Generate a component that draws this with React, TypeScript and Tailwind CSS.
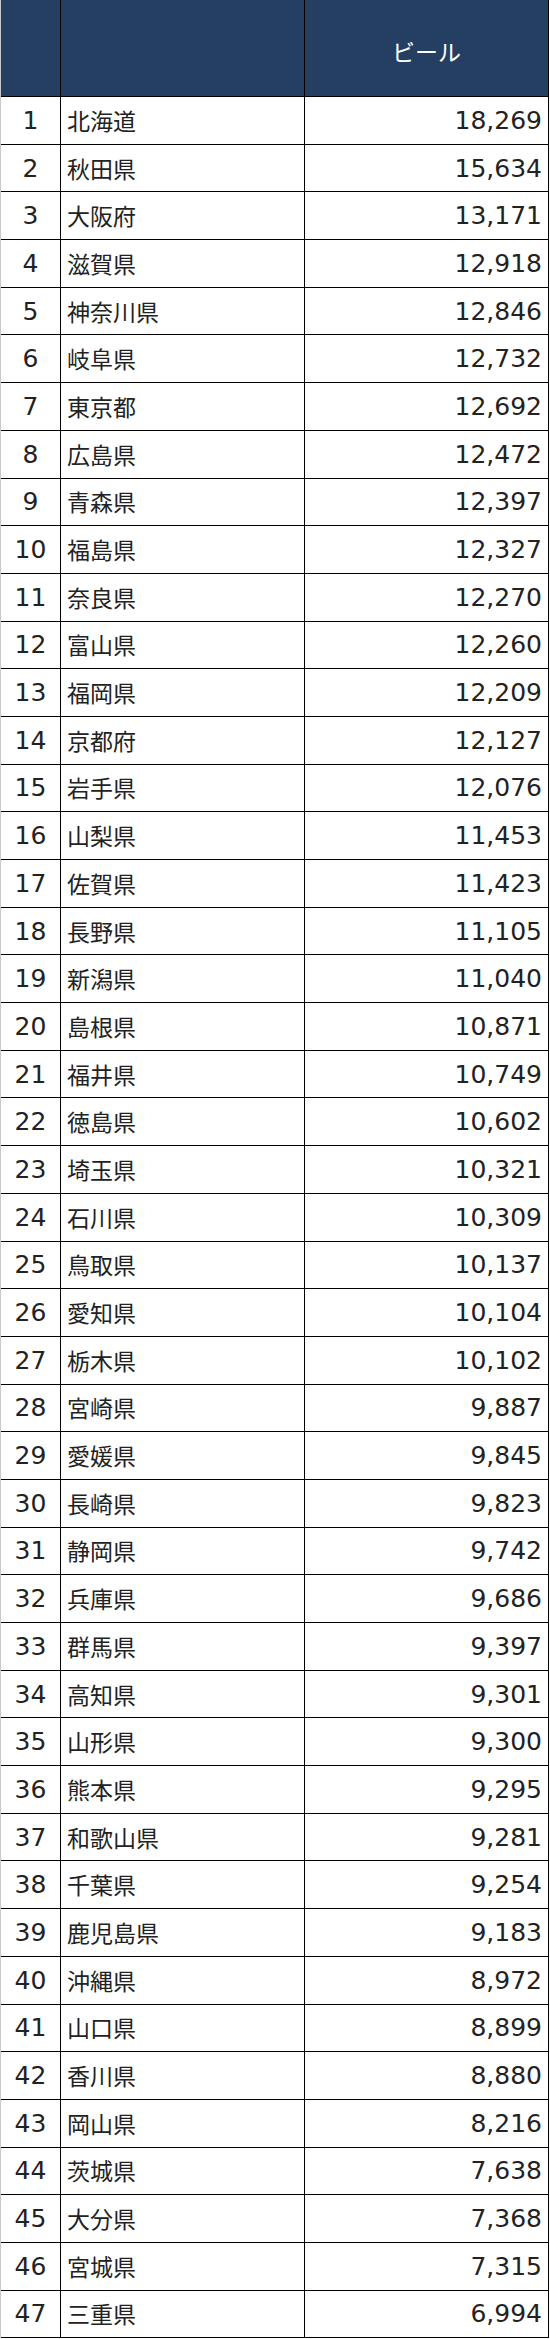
import React from "react";

const data: [string, string][] = [
  ["北海道", "18,269"],
  ["秋田県", "15,634"],
  ["大阪府", "13,171"],
  ["滋賀県", "12,918"],
  ["神奈川県", "12,846"],
  ["岐阜県", "12,732"],
  ["東京都", "12,692"],
  ["広島県", "12,472"],
  ["青森県", "12,397"],
  ["福島県", "12,327"],
  ["奈良県", "12,270"],
  ["富山県", "12,260"],
  ["福岡県", "12,209"],
  ["京都府", "12,127"],
  ["岩手県", "12,076"],
  ["山梨県", "11,453"],
  ["佐賀県", "11,423"],
  ["長野県", "11,105"],
  ["新潟県", "11,040"],
  ["島根県", "10,871"],
  ["福井県", "10,749"],
  ["徳島県", "10,602"],
  ["埼玉県", "10,321"],
  ["石川県", "10,309"],
  ["鳥取県", "10,137"],
  ["愛知県", "10,104"],
  ["栃木県", "10,102"],
  ["宮崎県", "9,887"],
  ["愛媛県", "9,845"],
  ["長崎県", "9,823"],
  ["静岡県", "9,742"],
  ["兵庫県", "9,686"],
  ["群馬県", "9,397"],
  ["高知県", "9,301"],
  ["山形県", "9,300"],
  ["熊本県", "9,295"],
  ["和歌山県", "9,281"],
  ["千葉県", "9,254"],
  ["鹿児島県", "9,183"],
  ["沖縄県", "8,972"],
  ["山口県", "8,899"],
  ["香川県", "8,880"],
  ["岡山県", "8,216"],
  ["茨城県", "7,638"],
  ["大分県", "7,368"],
  ["宮城県", "7,315"],
  ["三重県", "6,994"],
];

export default function App() {
  return (
    <div className="w-[550px] bg-white font-['DejaVu_Sans','Noto_Sans_CJK_JP',sans-serif] text-[#222]">
      <div className="w-[549px] border-l border-l-[#c8c8c8] border-r border-r-black">
        <div className="grid h-[97px] grid-cols-[60px_244px_1fr] border-b border-black bg-[#243f61]">
          <div className="border-r border-black" />
          <div className="border-r border-black" />
          <div className="flex items-center justify-center pt-[6px] font-['Noto_Sans_CJK_JP',sans-serif] text-[23px] text-white">
            ビール
          </div>
        </div>
        {data.map(([name, val], i) => (
          <div
            key={name}
            className="grid h-[47.7px] grid-cols-[60px_244px_1fr] border-b border-black"
          >
            <div className="flex items-center justify-center border-r border-black text-[25px] leading-none">
              {i + 1}
            </div>
            <div className="flex items-center border-r border-black pl-[6px] font-['Noto_Sans_CJK_JP',sans-serif] text-[23px] leading-none">
              {name}
            </div>
            <div className="flex items-center justify-end pr-[6px] text-[25px] leading-none">
              {val}
            </div>
          </div>
        ))}
      </div>
    </div>
  );
}
